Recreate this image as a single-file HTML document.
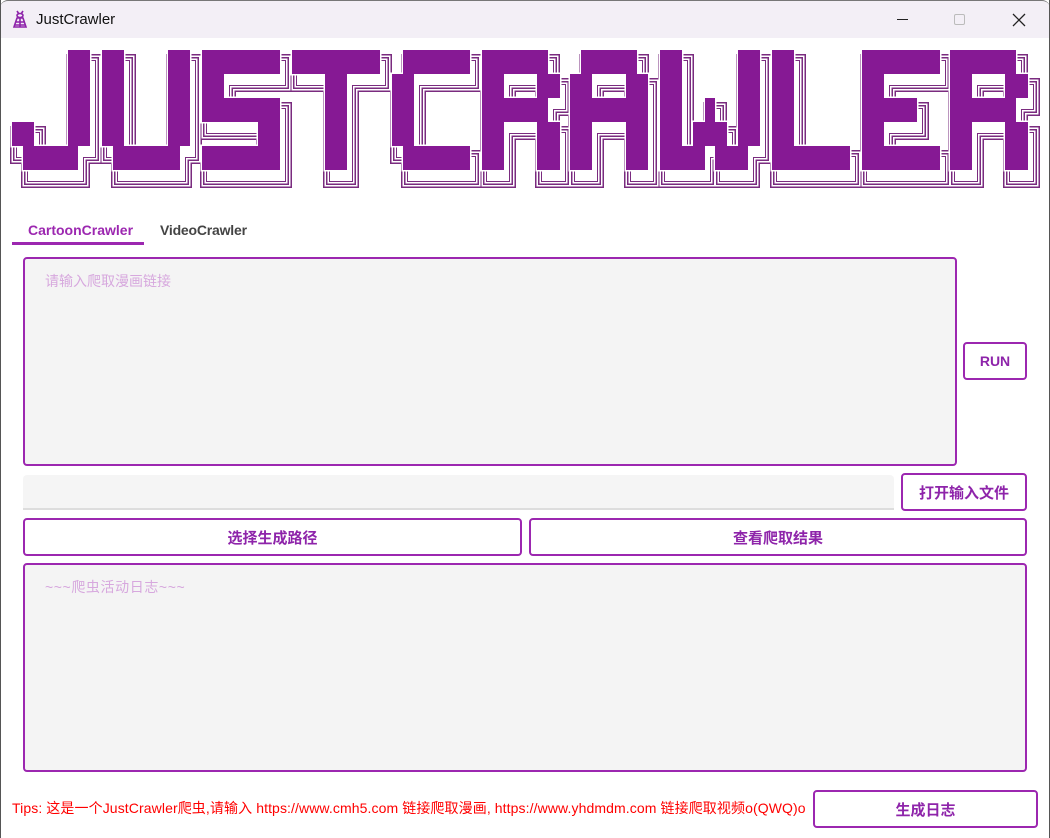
<!DOCTYPE html>
<html><head><meta charset="utf-8">
<style>
*{margin:0;padding:0;box-sizing:border-box}
body{width:1050px;height:838px;overflow:hidden;background:#fff;font-family:"Liberation Sans","Noto Sans CJK SC",sans-serif;position:relative}
.abs{position:absolute}
.title{left:0;top:0;width:1050px;height:38px;background:#f3eff6;border-top:1px solid #777;border-radius:8px 8px 0 0}
.frame{left:0;top:0;width:1050px;height:838px;border-left:1px solid #555;border-right:1px solid #555;pointer-events:none}
.box{border:2px solid #9c27b0;border-radius:4px}
.btn{border:2px solid #9c27b0;border-radius:4px;background:#fff;color:#8e24aa;font-weight:bold;font-size:15px;display:flex;align-items:center;justify-content:center}
.ta{background:#f4f4f4}
.ph{color:#d7a8de;font-size:14px}
</style></head><body>
<div class="abs title"></div>
<svg class="abs" style="left:10px;top:9px" width="20" height="20" viewBox="0 0 20 20" fill="none" stroke="#8e24aa" stroke-width="1.6">
<path d="M7 2l2 3M13 2l-2 3"/><ellipse cx="10" cy="6.5" rx="3" ry="2"/><path d="M4 18l3-9h6l3 9z"/><path d="M6 13h8M5 16h10M10 9v9"/></svg>
<div class="abs" style="left:36px;top:11px;font-size:15px;color:#111">JustCrawler</div>
<div class="abs" style="left:897px;top:19px;width:11px;height:1px;background:#222"></div>
<div class="abs" style="left:954px;top:14px;width:11px;height:11px;border:1px solid #bbb;border-radius:2px"></div>
<svg class="abs" style="left:1012px;top:13px" width="14" height="14"><path d="M1 1L13 13M13 1L1 13" stroke="#222" stroke-width="1.3"/></svg>

<svg class="abs" style="left:0;top:0" width="1050" height="200">
<defs><g id="L">
<rect x="68" y="50" width="22" height="96"/><rect x="12" y="122" width="22" height="24"/><rect x="23" y="146" width="55" height="24"/>
<rect x="102" y="50" width="22" height="96"/><rect x="168" y="50" width="22" height="96"/><rect x="113" y="146" width="67" height="24"/>
<rect x="202" y="50" width="78" height="24"/><rect x="202" y="74" width="22" height="48"/><rect x="202" y="98" width="78" height="24"/><rect x="258" y="122" width="22" height="48"/><rect x="202" y="146" width="78" height="24"/>
<rect x="292" y="50" width="88" height="24"/><rect x="325" y="74" width="22" height="96"/>
<rect x="403" y="50" width="67" height="24"/><rect x="392" y="74" width="22" height="72"/><rect x="403" y="146" width="67" height="24"/>
<rect x="482" y="50" width="22" height="120"/><rect x="482" y="50" width="66" height="24"/><rect x="537" y="74" width="23" height="24"/><rect x="482" y="98" width="66" height="24"/><rect x="537" y="122" width="23" height="48"/>
<rect x="581" y="50" width="56" height="24"/><rect x="570" y="74" width="22" height="96"/><rect x="626" y="74" width="22" height="96"/><rect x="570" y="98" width="78" height="24"/>
<rect x="660" y="50" width="22" height="96"/><rect x="660" y="146" width="45" height="24"/><rect x="705" y="98" width="10" height="24"/><rect x="693" y="122" width="34" height="24"/><rect x="715" y="146" width="33" height="24"/><rect x="738" y="50" width="22" height="96"/>
<rect x="772" y="50" width="22" height="120"/><rect x="772" y="146" width="78" height="24"/>
<rect x="862" y="50" width="22" height="120"/><rect x="862" y="50" width="78" height="24"/><rect x="862" y="98" width="55" height="24"/><rect x="862" y="146" width="78" height="24"/>
<rect x="950" y="50" width="22" height="120"/><rect x="950" y="50" width="66" height="24"/><rect x="1005" y="74" width="23" height="24"/><rect x="950" y="98" width="66" height="24"/><rect x="1005" y="122" width="23" height="48"/>
</g></defs>
<g transform="translate(5,11)" stroke-linejoin="miter">
<use href="#L" fill="#7a2b7f" stroke="#7a2b7f" stroke-width="14"/>
<use href="#L" fill="#fff" stroke="#fff" stroke-width="11"/>
<use href="#L" fill="#7a2b7f" stroke="#7a2b7f" stroke-width="8"/>
<use href="#L" fill="#fff" stroke="#fff" stroke-width="5"/>
<use href="#L" fill="#7a2b7f" stroke="#7a2b7f" stroke-width="2"/>
<use href="#L" fill="#fff"/>
</g>
<use href="#L" fill="#fff" stroke="#fff" stroke-width="3"/>
<use href="#L" fill="#861994"/>
</svg>

<div class="abs" style="left:28px;top:222px;font-size:14px;font-weight:bold;color:#9c27b0">CartoonCrawler</div>
<div class="abs" style="left:160px;top:222px;font-size:14px;font-weight:bold;color:#444;letter-spacing:-0.2px">VideoCrawler</div>
<div class="abs" style="left:12px;top:242px;width:132px;height:3px;background:#9c27b0"></div>

<div class="abs box ta" style="left:23px;top:257px;width:934px;height:209px"></div>
<div class="abs ph" style="left:45px;top:271px">请输入爬取漫画链接</div>
<div class="abs btn" style="left:963px;top:342px;width:64px;height:38px;font-size:14px">RUN</div>

<div class="abs" style="left:23px;top:475px;width:871px;height:35px;background:#f5f5f5;border-bottom:2px solid #ddd;border-radius:4px 4px 0 0"></div>
<div class="abs btn" style="left:901px;top:473px;width:126px;height:38px">打开输入文件</div>
<div class="abs btn" style="left:23px;top:518px;width:499px;height:38px">选择生成路径</div>
<div class="abs btn" style="left:529px;top:518px;width:498px;height:38px">查看爬取结果</div>

<div class="abs box ta" style="left:23px;top:563px;width:1004px;height:209px"></div>
<div class="abs ph" style="left:45px;top:577px;letter-spacing:0.6px">~~~爬虫活动日志~~~</div>

<div class="abs" style="left:12px;top:798px;font-size:14px;color:#f00;white-space:nowrap;letter-spacing:0.1px">Tips: 这是一个JustCrawler爬虫,请输入 https://www.cmh5.com 链接爬取漫画, https://www.yhdmdm.com 链接爬取视频o(QWQ)o</div>
<div class="abs btn" style="left:813px;top:790px;width:225px;height:38px">生成日志</div>
<div class="abs frame"></div>
</body></html>
